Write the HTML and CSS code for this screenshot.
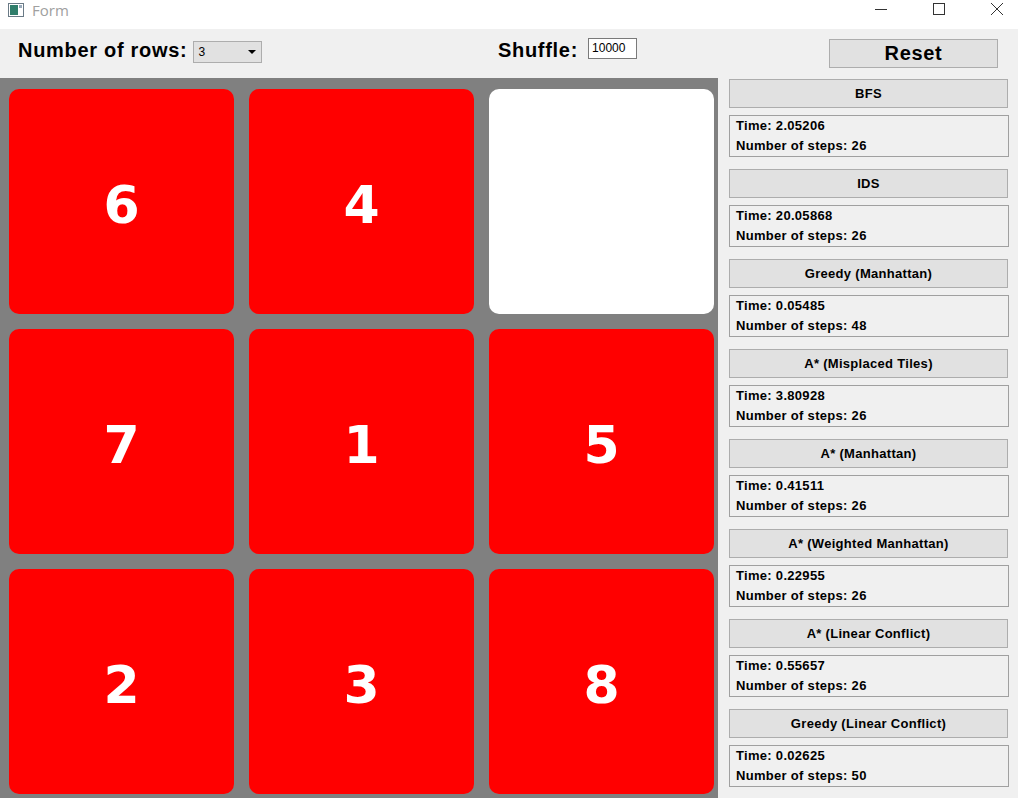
FILE: index.html
```html
<!DOCTYPE html>
<html lang="en">
<head>
  <meta charset="UTF-8">
  <title>Form</title>
  <link rel="stylesheet" href="styles.css">
</head>
<body>
  <div class="window">

    <!-- Title bar -->
    <div class="titlebar">
      <svg class="app-icon" width="16" height="14" viewBox="0 0 16 14">
        <rect x="0.5" y="0.5" width="15" height="13" fill="#fff" stroke="#6a7a86"/>
        <rect x="2" y="2" width="8" height="10" fill="#2f7d6a"/>
        <rect x="11" y="2" width="3" height="3" fill="#9ab"/>
      </svg>
      <span class="title">Form</span>
      <div class="win-controls">
        <svg width="12" height="12" viewBox="0 0 12 12"><path d="M0 6.5h12" stroke="#333" stroke-width="1"/></svg>
        <svg width="12" height="12" viewBox="0 0 12 12"><rect x="0.5" y="0.5" width="11" height="11" fill="none" stroke="#333"/></svg>
        <svg width="12" height="12" viewBox="0 0 12 12"><path d="M0 0l12 12M12 0L0 12" stroke="#333" stroke-width="1"/></svg>
      </div>
    </div>

    <!-- Toolbar -->
    <div class="toolbar">
      <div class="field rows">
        <label>Number of rows:</label>
        <div class="combo">3<span class="arrow"></span></div>
      </div>
      <div class="field shuffle">
        <label>Shuffle:</label>
        <div class="textbox">10000</div>
      </div>
      <button class="btn-reset">Reset</button>
    </div>

    <div class="main">
      <!-- Puzzle board -->
      <div class="board">
        <div class="tile">6</div>
        <div class="tile">4</div>
        <div class="tile blank"></div>
        <div class="tile">7</div>
        <div class="tile">1</div>
        <div class="tile">5</div>
        <div class="tile">2</div>
        <div class="tile">3</div>
        <div class="tile">8</div>
      </div>

      <!-- Solver results -->
      <div class="side">
        <button class="algo">BFS</button>
        <div class="result">Time: 2.05206<br>Number of steps: 26</div>
        <button class="algo">IDS</button>
        <div class="result">Time: 20.05868<br>Number of steps: 26</div>
        <button class="algo">Greedy (Manhattan)</button>
        <div class="result">Time: 0.05485<br>Number of steps: 48</div>
        <button class="algo">A* (Misplaced Tiles)</button>
        <div class="result">Time: 3.80928<br>Number of steps: 26</div>
        <button class="algo">A* (Manhattan)</button>
        <div class="result">Time: 0.41511<br>Number of steps: 26</div>
        <button class="algo">A* (Weighted Manhattan)</button>
        <div class="result">Time: 0.22955<br>Number of steps: 26</div>
        <button class="algo">A* (Linear Conflict)</button>
        <div class="result">Time: 0.55657<br>Number of steps: 26</div>
        <button class="algo">Greedy (Linear Conflict)</button>
        <div class="result">Time: 0.02625<br>Number of steps: 50</div>
      </div>
    </div>
  </div>
</body>
</html>
```

FILE: styles.css
```css
/* Basic page styling */
body {
  margin: 0;
  padding: 0;
  font-family: "Liberation Sans", Arial, sans-serif;
  background-color: #f0f0f0;
  overflow: hidden;
}

.window {
  width: 1018px;
  height: 798px;
  display: flex;
  flex-direction: column;
}

/* Title bar */
.titlebar {
  height: 29px;
  flex-shrink: 0;
  box-sizing: border-box;
  background-color: #ffffff;
  display: flex;
  align-items: flex-start;
  padding: 2px 0 0 8px;
}

.app-icon {
  margin-right: 8px;
  margin-top: 1px;
}

.title {
  font-family: "Open Sans", sans-serif;
  font-size: 15px;
  line-height: 16px;
  color: #a0a0a0;
}

.win-controls {
  margin-left: auto;
  margin-top: 1px;
  display: flex;
  gap: 46px;
  padding-right: 15px;
}

/* Toolbar */
.toolbar {
  height: 49px;
  flex-shrink: 0;
  box-sizing: border-box;
  display: flex;
  align-items: center;
  padding: 0 0 6px 18px;
}

.field {
  display: flex;
  align-items: center;
}

.field label {
  font-size: 20px;
  font-weight: bold;
  letter-spacing: 0.7px;
  color: #000;
}

.rows {
  width: 480px;
  gap: 6px;
}

.combo {
  position: relative;
  width: 63px;
  height: 20px;
  border: 1px solid #adadad;
  background-color: #e1e1e1;
  font-size: 12px;
  line-height: 20px;
  padding-left: 4px;
  margin-top: 2px;
}

.combo .arrow {
  position: absolute;
  right: 5px;
  top: 8px;
  border-left: 4px solid transparent;
  border-right: 4px solid transparent;
  border-top: 4px solid #000;
}

.shuffle {
  width: 331px;
  gap: 10px;
}

.textbox {
  width: 44px;
  height: 19px;
  border: 1px solid #7a7a7a;
  background-color: #fff;
  font-size: 12px;
  line-height: 19px;
  padding-left: 3px;
  margin-top: -4px;
}

.btn-reset {
  margin-top: 6px;
  width: 169px;
  height: 29px;
  border: 1px solid #adadad;
  background-color: #e1e1e1;
  font-family: "Liberation Sans", Arial, sans-serif;
  font-size: 20px;
  font-weight: bold;
  letter-spacing: 0.7px;
  padding: 0;
}

/* Main area */
.main {
  flex: 1;
  display: flex;
  overflow: hidden;
}

.board {
  width: 718px;
  background-color: #808080;
  box-sizing: border-box;
  padding: 11px 0 0 9px;
  display: grid;
  grid-template-columns: repeat(3, 225px);
  grid-auto-rows: 225px;
  column-gap: 15px;
  row-gap: 15px;
  align-content: start;
}

.tile {
  background-color: #ff0000;
  border-radius: 10px;
  color: #ffffff;
  font-family: "DejaVu Sans", sans-serif;
  font-size: 52px;
  font-weight: bold;
  padding-top: 6px;
  box-sizing: border-box;
  display: flex;
  align-items: center;
  justify-content: center;
}

.tile.blank {
  background-color: #ffffff;
}

/* Side panel */
.side {
  flex: 1;
  padding: 1px 0 0 11px;
  display: flex;
  flex-direction: column;
}

.algo {
  width: 279px;
  height: 29px;
  flex-shrink: 0;
  border: 1px solid #adadad;
  background-color: #e1e1e1;
  font-family: "Liberation Sans", Arial, sans-serif;
  font-size: 13px;
  font-weight: bold;
  letter-spacing: 0.3px;
  color: #000;
  padding: 0;
}

.result {
  width: 280px;
  height: 42px;
  flex-shrink: 0;
  box-sizing: border-box;
  margin: 7px 0 12px;
  border: 1px solid #a0a0a0;
  font-size: 13px;
  font-weight: bold;
  letter-spacing: 0.3px;
  line-height: 20px;
  padding: 0 6px;
}
```
